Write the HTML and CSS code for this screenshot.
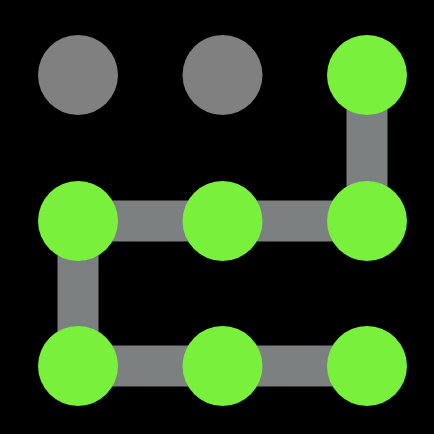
FILE: index.html
```html
<!DOCTYPE html>
<html>
<head>
<meta charset="utf-8">
<link rel="stylesheet" href="styles.css">
</head>
<body>
<div class="board">
<svg class="pattern" width="434" height="434" viewBox="0 0 434 434" xmlns="http://www.w3.org/2000/svg">
  <path class="link" d="M367 75 V221 H78 V366 H367"/>
  <circle class="dot off" cx="78" cy="75" r="40"/>
  <circle class="dot off" cx="222.5" cy="75" r="40"/>
  <circle class="dot on" cx="367" cy="75" r="40"/>
  <circle class="dot on" cx="78" cy="221" r="40"/>
  <circle class="dot on" cx="222.5" cy="221" r="40"/>
  <circle class="dot on" cx="367" cy="221" r="40"/>
  <circle class="dot on" cx="78" cy="366" r="40"/>
  <circle class="dot on" cx="222.5" cy="366" r="40"/>
  <circle class="dot on" cx="367" cy="366" r="40"/>
</svg>
</div>
</body>
</html>
```
FILE: styles.css
```css
html, body {
  margin: 0;
  padding: 0;
  background: #000;
  width: 434px;
  height: 434px;
  overflow: hidden;
}
.board {
  width: 434px;
  height: 434px;
}
.pattern {
  display: block;
}
.link {
  fill: none;
  stroke: #7c8080;
  stroke-width: 41;
  stroke-linejoin: miter;
}
.dot.off {
  fill: #808080;
}
.dot.on {
  fill: #78f03c;
}
```
